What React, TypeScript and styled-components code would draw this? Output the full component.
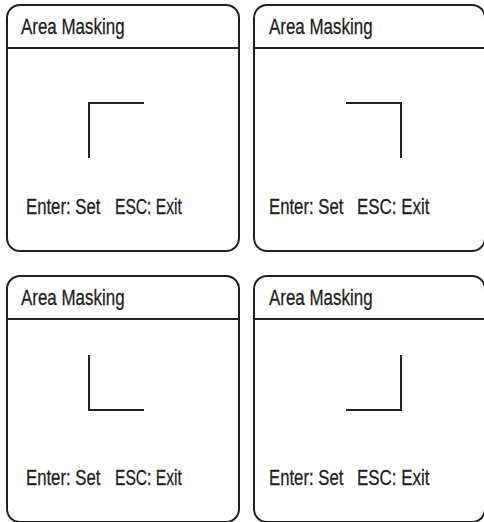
import React from 'react';
import styled, { createGlobalStyle } from 'styled-components';

type Corner = 'tl' | 'tr' | 'bl' | 'br';

interface IMaskPanel {
  corner: Corner;
  markX: number;
  markY: number;
  titleX: number;
  footerX: number;
  hintStep: number;
  exitSqueeze: number;
}

const GlobalStyle = createGlobalStyle`
  html, body {
    margin: 0;
    padding: 0;
    background: #ffffff;
    overflow: hidden;
  }
`;

export const PanelGrid = styled.div`
  display: grid;
  grid-template-columns: 234px 233px;
  grid-auto-rows: 248px;
  column-gap: 13px;
  row-gap: 23px;
  padding: 4px 0 0 6px;
  font-family: "Liberation Sans", Arial, sans-serif;
  color: #231f20;
`;

export const Panel = styled.section`
  display: flex;
  flex-direction: column;
  box-sizing: border-box;
  border: 2px solid #231f20;
  border-radius: 14px;
  background: #ffffff;
`;

export const PanelHeader = styled.header<{ $inset: number }>`
  padding: 9px 0 8px ${(p) => p.$inset}px;
  border-bottom: 2px solid #231f20;
  font-size: 22px;
  line-height: 24px;
`;

// the OSD face is a condensed grotesque; squeeze Liberation Sans to match
export const Condensed = styled.span<{ $squeeze: number }>`
  display: inline-block;
  white-space: nowrap;
  transform: scaleX(${(p) => p.$squeeze});
  transform-origin: left center;
  -webkit-text-stroke: 0.3px #231f20;
`;

export const PanelStage = styled.div`
  flex: 1;
`;

export const CornerMark = styled.div<{ $corner: Corner; $x: number; $y: number }>`
  box-sizing: border-box;
  width: 56px;
  height: 56px;
  margin: ${(p) => `${p.$y}px 0 0 ${p.$x}px`};
  border: 0 solid #231f20;
  ${(p) => (p.$corner[0] === 't' ? 'border-top-width: 2px;' : 'border-bottom-width: 2px;')}
  ${(p) => (p.$corner[1] === 'l' ? 'border-left-width: 2px;' : 'border-right-width: 2px;')}
`;

export const PanelFooter = styled.footer<{ $inset: number; $step: number }>`
  display: grid;
  grid-template-columns: ${(p) => p.$step}px 1fr;
  padding: 0 0 31px ${(p) => p.$inset}px;
  font-size: 22px;
  line-height: 24px;
`;

const panels: IMaskPanel[] = [
  { corner: 'tl', markX: 80, markY: 53, titleX: 13, footerX: 18, hintStep: 89, exitSqueeze: 0.71 },
  { corner: 'tr', markX: 91, markY: 53, titleX: 14, footerX: 14, hintStep: 88, exitSqueeze: 0.77 },
  { corner: 'bl', markX: 80, markY: 35, titleX: 13, footerX: 18, hintStep: 89, exitSqueeze: 0.71 },
  { corner: 'br', markX: 91, markY: 35, titleX: 14, footerX: 14, hintStep: 88, exitSqueeze: 0.77 },
];

const AreaMaskingPanel: React.FC<IMaskPanel> = ({
  corner,
  markX,
  markY,
  titleX,
  footerX,
  hintStep,
  exitSqueeze,
}) => (
  <Panel>
    <PanelHeader $inset={titleX}>
      <Condensed $squeeze={0.77}>Area Masking</Condensed>
    </PanelHeader>

    <PanelStage>
      <CornerMark $corner={corner} $x={markX} $y={markY} />
    </PanelStage>

    <PanelFooter $inset={footerX} $step={hintStep}>
      <Condensed $squeeze={0.76}>Enter: Set</Condensed>
      <Condensed $squeeze={exitSqueeze}>ESC: Exit</Condensed>
    </PanelFooter>
  </Panel>
);

export default function App() {
  return (
    <>
      <GlobalStyle />
      <PanelGrid>
        {panels.map((panel) => (
          <AreaMaskingPanel key={panel.corner} {...panel} />
        ))}
      </PanelGrid>
    </>
  );
}
